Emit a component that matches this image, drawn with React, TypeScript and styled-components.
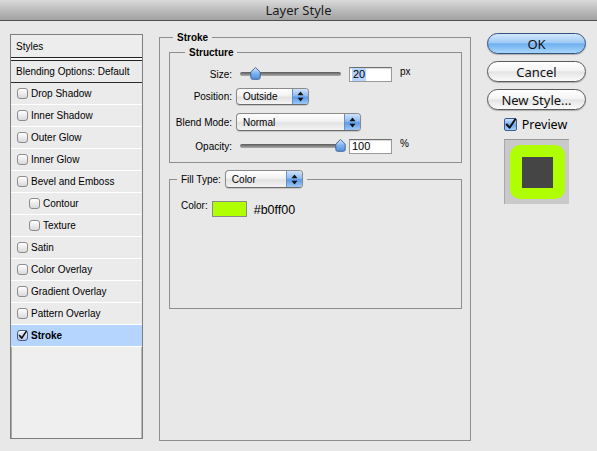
import React from "react";
import styled, { createGlobalStyle, css } from "styled-components";

const Global = createGlobalStyle`
  html, body { margin: 0; padding: 0; background: #e8e8e8; }
  body { font-family: "Liberation Sans", Arial, sans-serif; font-size: 10px; color: #000; }
  * { box-sizing: border-box; }
`;

const Window = styled.div`
  width: 597px;
  height: 451px;
  background: #e8e8e8;
  display: flex;
  flex-direction: column;
  overflow: hidden;
`;

const TitleBar = styled.div`
  height: 21px;
  flex: none;
  background: linear-gradient(#dadada, #bcbcbc 50%, #a2a2a2);
  border-bottom: 1px solid #505050;
  display: flex;
  align-items: center;
  justify-content: center;
  font-family: "Noto Sans", sans-serif;
  font-size: 13px;
  color: #1a1a1a;
  padding-bottom: 1px;
`;

const Body = styled.div`
  display: flex;
  align-items: flex-start;
  padding: 10px 0 0 10px;
`;

/* ---------- left list ---------- */
const StyleList = styled.div`
  width: 133px;
  height: 405px;
  margin-top: 3px;
  border: 1px solid #7e7e7e;
  box-shadow: inset 1px 1px 0 #a8a8a8, inset -1px 0 0 #b8b8b8;
  background: #efefef;
  display: flex;
  flex-direction: column;
  flex: none;
`;

const ListHeader = styled.div`
  height: 23px;
  padding-left: 5px;
  display: flex;
  align-items: center;
  border-bottom: 1px solid #222;
  background: #ededed;
`;

const HeaderGap = styled.div`
  height: 3px;
  border-bottom: 1px solid #222;
  background: #f6f6f6;
`;

const ListRow = styled.div<{ $indent?: boolean; $selected?: boolean; $strong?: boolean }>`
  height: 22px;
  display: flex;
  align-items: center;
  gap: 3px;
  padding-left: ${(p) => (p.$indent ? 18 : 6)}px;
  border-bottom: 1px solid ${(p) => (p.$strong ? "#2a2a2a" : "#ffffff")};
  background: ${(p) => (p.$selected ? "#b5d5ff" : "#ebebeb")};
  ${(p) =>
    p.$strong &&
    css`
      padding-left: 5px;
    `}
`;

const SmallBox = styled.span<{ $checked?: boolean }>`
  width: 11px;
  height: 11px;
  flex: none;
  border: 1px solid #8c8c8c;
  border-radius: 3px;
  background: linear-gradient(#ffffff, #d9d9d9);
  box-shadow: inset 0 1px 0 #fff;
  display: flex;
  align-items: center;
  justify-content: center;
  ${(p) =>
    p.$checked &&
    css`
      border-color: #4a5a7a;
      background: linear-gradient(#e8eefc, #b8c8e8);
    `}
`;

/* ---------- middle ---------- */
const Group = styled.fieldset<{ $w: number; $h: number; $pad?: string }>`
  margin: 0;
  min-width: 0;
  width: ${(p) => p.$w}px;
  height: ${(p) => p.$h}px;
  border: 1px solid #8e8e8e;
  padding: ${(p) => p.$pad ?? "0"};
  flex: none;
`;

const GroupTitle = styled.legend<{ $ml: number }>`
  margin-left: ${(p) => p.$ml}px;
  padding: 0 4px;
  font-weight: bold;
  font-size: 10px;
  line-height: 13px;
  display: flex;
  align-items: center;
  gap: 4px;
`;

const StrokeGroup = styled(Group)`
  margin-left: 16px;
  display: flex;
  flex-direction: column;
  gap: 7px;
`;

const FormRow = styled.div<{ $h: number }>`
  height: ${(p) => p.$h}px;
  display: grid;
  grid-template-columns: 62px auto;
  column-gap: 4px;
  align-items: center;
`;

const Label = styled.span`
  text-align: right;
  white-space: nowrap;
`;

const Controls = styled.div`
  display: flex;
  align-items: center;
`;

const Track = styled.div`
  position: relative;
  width: 101px;
  height: 14px;
  margin-left: 4px;
  margin-right: 8px;
  display: flex;
  align-items: center;
  &::before {
    content: "";
    display: block;
    width: 100%;
    height: 4px;
    border-radius: 2px;
    background: linear-gradient(#5a5a5a, #8a8a8a 60%, #b0b0b0);
  }
`;

const Thumb = styled.svg`
  position: absolute;
  top: 0;
`;

const NumberField = styled.div`
  width: 43px;
  height: 15px;
  background: #fff;
  border: 1px solid #9a9a9a;
  border-top-color: #6e6e6e;
  box-shadow: inset 0 1px 1px rgba(0, 0, 0, 0.15);
  font-size: 11px;
  line-height: 13px;
  padding-left: 2px;
  display: flex;
  align-items: center;
`;

const Selected = styled.span`
  background: #b5d5ff;
  padding: 0 1px;
`;

const Unit = styled.span`
  font-size: 10px;
  margin-left: 8px;
  align-self: flex-start;
  margin-top: -1px;
`;

const Popup = styled.div<{ $w: number; $h: number }>`
  width: ${(p) => p.$w}px;
  height: ${(p) => p.$h}px;
  border: 1px solid #8a8a8a;
  border-bottom-color: #6a6a6a;
  border-radius: 4px;
  background: linear-gradient(#ffffff, #f2f2f2 45%, #e2e2e2 55%, #f4f4f4);
  display: flex;
  align-items: stretch;
  overflow: hidden;
  box-shadow: 0 1px 1px rgba(0, 0, 0, 0.15);
  font-weight: normal;
`;

const PopupText = styled.span`
  flex: 1;
  display: flex;
  align-items: center;
  padding-left: 6px;
  font-size: 10px;
`;

const PopupArrows = styled.span`
  width: 16px;
  flex: none;
  background: linear-gradient(#cfe3fb, #8fbcf0 45%, #5d9ae8 55%, #9cc8f5);
  border-left: 1px solid #6a8fc8;
  display: flex;
  align-items: center;
  justify-content: center;
`;

const FillBody = styled.div`
  padding: 12px 0 0 11px;
  display: flex;
  align-items: flex-start;
  gap: 4px;
`;

const Swatch = styled.div`
  width: 35px;
  height: 16px;
  background: #b0ff00;
  border: 1px solid #8a8a8a;
  margin-top: 1px;
`;

const Hex = styled.span`
  font-size: 12.5px;
  margin-left: 3px;
  margin-top: 3px;
`;

/* ---------- right ---------- */
const Side = styled.div`
  margin-left: 16px;
  margin-top: 2px;
  width: 99px;
  display: flex;
  flex-direction: column;
  align-items: center;
`;

const Button = styled.div<{ $primary?: boolean; $mt: number }>`
  width: 99px;
  height: 21px;
  margin-top: ${(p) => p.$mt}px;
  border-radius: 11px;
  border: 1px solid ${(p) => (p.$primary ? "#33507f" : "#5a5a5a")};
  background: ${(p) =>
    p.$primary
      ? "linear-gradient(#d4e8fd, #9fcaf6 45%, #6fb0f0 52%, #a8d6fb)"
      : "linear-gradient(#ffffff, #f4f4f4 45%, #e4e4e4 52%, #fafafa)"};
  box-shadow: 0 1px 1px rgba(0, 0, 0, 0.25);
  display: flex;
  align-items: center;
  justify-content: center;
  font-family: "Noto Sans", sans-serif;
  font-size: 13px;
  color: #111;
`;

const PreviewRow = styled.div`
  margin-top: 7px;
  height: 15px;
  display: flex;
  align-items: center;
  gap: 5px;
  font-family: "Noto Sans", sans-serif;
  font-size: 12.5px;
  padding-right: 2px;
`;

const AquaBox = styled.span`
  width: 13px;
  height: 13px;
  border: 1px solid #3d5b8c;
  border-radius: 2px;
  background: linear-gradient(#cde3fb, #6fa8ee 55%, #a6d0fa);
  display: flex;
  align-items: center;
  justify-content: center;
  overflow: visible;
`;

const PreviewWell = styled.div`
  margin-top: 7px;
  width: 65px;
  height: 65px;
  background: #c9c9c9;
  border-top: 1px solid #9a9a9a;
  border-left: 1px solid #a8a8a8;
  display: flex;
  align-items: center;
  justify-content: center;
`;

const Glow = styled.div`
  width: 55px;
  height: 54px;
  border-radius: 10px;
  background: #b0ff00;
  display: flex;
  align-items: center;
  justify-content: center;
`;

const Core = styled.div`
  width: 31px;
  height: 31px;
  background: #454545;
`;

/* ---------- pieces ---------- */
const Check = ({ size = 12 }: { size?: number }) => (
  <svg width={size} height={size} viewBox="0 0 12 12" style={{ overflow: "visible" }}>
    <path d="M2 6 L5 9.5 L11 0.5" fill="none" stroke="#111" strokeWidth="2.2" strokeLinejoin="round" strokeLinecap="round" />
  </svg>
);

const Slider = ({ pos }: { pos: number }) => (
  <Track>
    <Thumb width="11" height="13" viewBox="0 0 11 13" style={{ left: pos - 5 }}>
      <defs>
        <linearGradient id="tg" x1="0" y1="0" x2="0" y2="1">
          <stop offset="0" stopColor="#d8e9fc" />
          <stop offset="0.5" stopColor="#7fb3ef" />
          <stop offset="1" stopColor="#4e8fe0" />
        </linearGradient>
      </defs>
      <path d="M5.5 0.5 L10.2 5 L10.2 10.5 Q10.2 12.3 8.5 12.3 L2.5 12.3 Q0.8 12.3 0.8 10.5 L0.8 5 Z" fill="url(#tg)" stroke="#3e5f91" strokeWidth="0.9" />
    </Thumb>
  </Track>
);

const Arrows = () => (
  <svg width="7" height="11" viewBox="0 0 7 11">
    <path d="M3.5 0.5 L6.5 4.3 L0.5 4.3 Z" fill="#111" />
    <path d="M3.5 10.5 L6.5 6.7 L0.5 6.7 Z" fill="#111" />
  </svg>
);

const Select = ({ w, h, value }: { w: number; h: number; value: string }) => (
  <Popup $w={w} $h={h}>
    <PopupText>{value}</PopupText>
    <PopupArrows>
      <Arrows />
    </PopupArrows>
  </Popup>
);

const effects: { name: string; indent?: boolean; checked?: boolean }[] = [
  { name: "Drop Shadow" },
  { name: "Inner Shadow" },
  { name: "Outer Glow" },
  { name: "Inner Glow" },
  { name: "Bevel and Emboss" },
  { name: "Contour", indent: true },
  { name: "Texture", indent: true },
  { name: "Satin" },
  { name: "Color Overlay" },
  { name: "Gradient Overlay" },
  { name: "Pattern Overlay" },
  { name: "Stroke", checked: true },
];

export default function App() {
  return (
    <Window>
      <Global />
      <TitleBar>Layer Style</TitleBar>
      <Body>
        <StyleList>
          <ListHeader>Styles</ListHeader>
          <HeaderGap />
          <ListRow $strong>Blending Options: Default</ListRow>
          {effects.map((e) => (
            <ListRow key={e.name} $indent={e.indent} $selected={e.checked}>
              <SmallBox $checked={e.checked}>{e.checked && <Check size={9} />}</SmallBox>
              {e.checked ? <b>{e.name}</b> : e.name}
            </ListRow>
          ))}
        </StyleList>

        <StrokeGroup $w={312} $h={410} $pad="2px 8px 0 9px">
          <GroupTitle $ml={4}>Stroke</GroupTitle>
          <Group $w={293} $h={117} $pad="4px 0 0 0">
            <GroupTitle $ml={15}>Structure</GroupTitle>
            <FormRow $h={22}>
              <Label>Size:</Label>
              <Controls>
                <Slider pos={15} />
                <NumberField>
                  <Selected>20</Selected>
                </NumberField>
                <Unit>px</Unit>
              </Controls>
            </FormRow>
            <FormRow $h={22}>
              <Label>Position:</Label>
              <Controls>
                <Select w={73} h={17} value="Outside" />
              </Controls>
            </FormRow>
            <FormRow $h={30}>
              <Label>Blend Mode:</Label>
              <Controls>
                <Select w={125} h={18} value="Normal" />
              </Controls>
            </FormRow>
            <FormRow $h={18}>
              <Label>Opacity:</Label>
              <Controls>
                <Slider pos={100} />
                <NumberField>100</NumberField>
                <Unit>%</Unit>
              </Controls>
            </FormRow>
          </Group>
          <Group $w={293} $h={139}>
            <GroupTitle $ml={7}>
              <span style={{ fontWeight: "normal" }}>Fill Type:</span>
              <Select w={78} h={18} value="Color" />
            </GroupTitle>
            <FillBody>
              <span>Color:</span>
              <Swatch />
              <Hex>#b0ff00</Hex>
            </FillBody>
          </Group>
        </StrokeGroup>

        <Side>
          <Button $primary $mt={0}>OK</Button>
          <Button $mt={7}>Cancel</Button>
          <Button $mt={7}>New Style...</Button>
          <PreviewRow>
            <AquaBox>
              <Check size={11} />
            </AquaBox>
            Preview
          </PreviewRow>
          <PreviewWell>
            <Glow>
              <Core />
            </Glow>
          </PreviewWell>
        </Side>
      </Body>
    </Window>
  );
}
